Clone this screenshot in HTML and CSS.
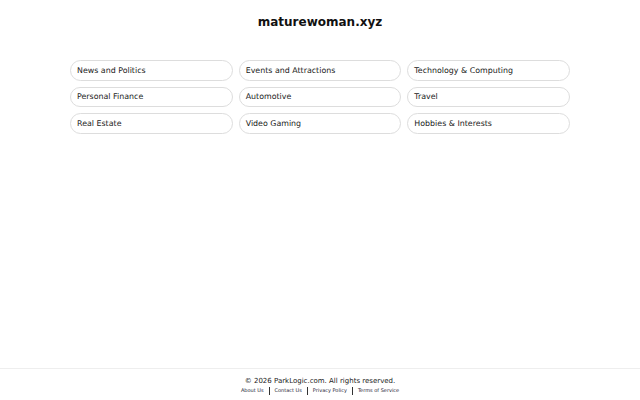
FILE: index.html
```html
<!DOCTYPE html>
<html>
<head>
<meta charset="utf-8">
<link rel="stylesheet" href="styles.css">
</head>
<body>
<div class="page">
  <main class="main">
    <h1 class="title">maturewoman.xyz</h1>
    <div class="grid">
      <a class="pill" href="#">News and Politics</a>
      <a class="pill" href="#">Events and Attractions</a>
      <a class="pill" href="#">Technology &amp; Computing</a>
      <a class="pill" href="#">Personal Finance</a>
      <a class="pill" href="#">Automotive</a>
      <a class="pill" href="#">Travel</a>
      <a class="pill" href="#">Real Estate</a>
      <a class="pill" href="#">Video Gaming</a>
      <a class="pill" href="#">Hobbies &amp; Interests</a>
    </div>
  </main>
  <footer class="footer">
    <div class="copy">© 2026 ParkLogic.com. All rights reserved.</div>
    <div class="links">
      <a href="#">About Us</a><span class="sep"></span>
      <a href="#">Contact Us</a><span class="sep"></span>
      <a href="#">Privacy Policy</a><span class="sep"></span>
      <a href="#">Terms of Service</a>
    </div>
  </footer>
</div>
</body>
</html>
```
FILE: styles.css
```css
html, body { margin: 0; padding: 0; background: #fff; }
body { font-family: "DejaVu Sans", sans-serif; color: #111; }
.page { height: 400px; display: flex; flex-direction: column; }
.main { flex: 1; display: flex; flex-direction: column; align-items: center; }
.title { margin: 15px 0 0; font-size: 12px; font-weight: bold; line-height: 14px; color: #111; }
.grid { margin-top: 31px; width: 500px; display: grid; grid-template-columns: repeat(3, 1fr); column-gap: 6px; row-gap: 6.17px; }
.pill { box-sizing: border-box; display: flex; align-items: center; height: 20.5px; padding: 0 6px; border: 1px solid #ddd; border-radius: 11px; font-size: 7.9px; color: #222; text-decoration: none; }
.footer { border-top: 1px solid #eee; height: 32px; display: flex; flex-direction: column; align-items: center; padding-top: 7px; box-sizing: border-box; }
.copy { font-size: 7px; line-height: 10px; color: #222; }
.links { display: flex; align-items: center; font-size: 5px; line-height: 9px; }
.links a { color: #223; text-decoration: none; }
.sep { width: 1px; height: 8px; background: #333; margin: 0 5px; }
```
